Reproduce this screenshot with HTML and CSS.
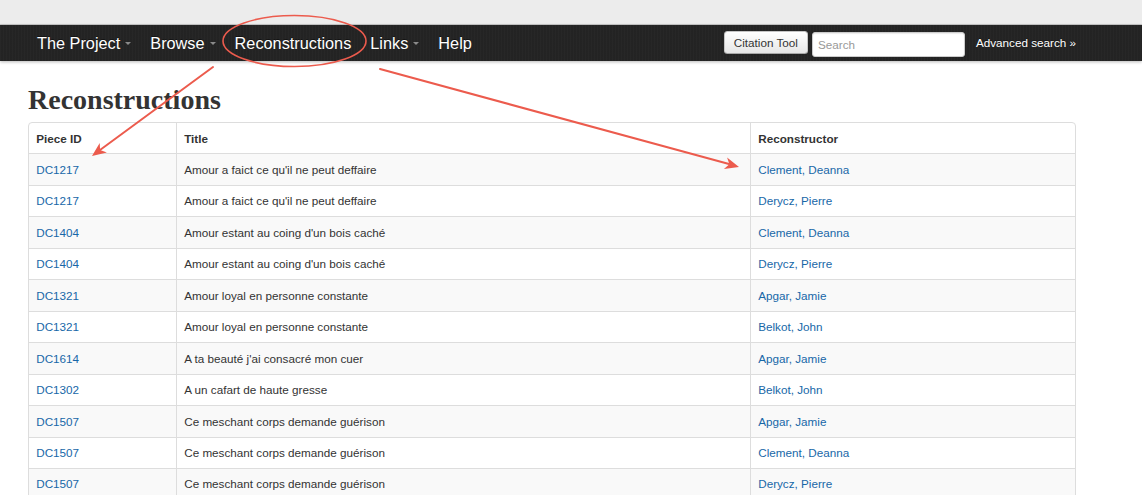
FILE: index.html
```html
<!DOCTYPE html>
<html lang="en">
<head>
<meta charset="utf-8">
<title>Reconstructions</title>
<link rel="stylesheet" href="styles.css">
</head>
<body>
<div class="chrome"></div>
<header class="navbar">
  <div class="container nav-inner">
    <ul class="nav">
      <li><a href="#">The Project<span class="caret"></span></a></li>
      <li><a href="#">Browse<span class="caret"></span></a></li>
      <li><a href="#">Reconstructions</a></li>
      <li><a href="#">Links<span class="caret"></span></a></li>
      <li><a href="#">Help</a></li>
    </ul>
    <div class="nav-right">
      <button class="btn" type="button">Citation Tool</button>
      <input class="search" type="text" placeholder="Search">
      <a class="adv" href="#">Advanced search &raquo;</a>
    </div>
  </div>
</header>
<main class="container">
  <h1 class="title">Reconstructions</h1>
  <table class="grid">
    <colgroup>
      <col class="c1"><col class="c2"><col class="c3">
    </colgroup>
    <thead>
      <tr><th>Piece ID</th><th>Title</th><th>Reconstructor</th></tr>
    </thead>
    <tbody>
      <tr><td><a href="#">DC1217</a></td><td>Amour a faict ce qu'il ne peut deffaire</td><td><a href="#">Clement, Deanna</a></td></tr>
      <tr><td><a href="#">DC1217</a></td><td>Amour a faict ce qu'il ne peut deffaire</td><td><a href="#">Derycz, Pierre</a></td></tr>
      <tr><td><a href="#">DC1404</a></td><td>Amour estant au coing d'un bois caché</td><td><a href="#">Clement, Deanna</a></td></tr>
      <tr><td><a href="#">DC1404</a></td><td>Amour estant au coing d'un bois caché</td><td><a href="#">Derycz, Pierre</a></td></tr>
      <tr><td><a href="#">DC1321</a></td><td>Amour loyal en personne constante</td><td><a href="#">Apgar, Jamie</a></td></tr>
      <tr><td><a href="#">DC1321</a></td><td>Amour loyal en personne constante</td><td><a href="#">Belkot, John</a></td></tr>
      <tr><td><a href="#">DC1614</a></td><td>A ta beauté j'ai consacré mon cuer</td><td><a href="#">Apgar, Jamie</a></td></tr>
      <tr><td><a href="#">DC1302</a></td><td>A un cafart de haute gresse</td><td><a href="#">Belkot, John</a></td></tr>
      <tr><td><a href="#">DC1507</a></td><td>Ce meschant corps demande guérison</td><td><a href="#">Apgar, Jamie</a></td></tr>
      <tr><td><a href="#">DC1507</a></td><td>Ce meschant corps demande guérison</td><td><a href="#">Clement, Deanna</a></td></tr>
      <tr><td><a href="#">DC1507</a></td><td>Ce meschant corps demande guérison</td><td><a href="#">Derycz, Pierre</a></td></tr>
    </tbody>
  </table>
</main>
<svg class="annot" width="1142" height="495" viewBox="0 0 1142 495" aria-hidden="true">
  <g fill="none" stroke="#ec5b4d" stroke-linecap="round">
    <ellipse cx="294.5" cy="41" rx="71.5" ry="25.5" stroke-width="1.6"/>
    <line x1="213" y1="67" x2="100" y2="150" stroke-width="2"/>
    <line x1="380" y1="69" x2="729" y2="164" stroke-width="2"/>
  </g>
  <g fill="#ec5b4d">
    <polygon points="92,156 106.9,152.5 100.1,150.1 99.7,142.9"/>
    <polygon points="739,167 723.9,169.1 729.4,164.3 727.1,157.5"/>
  </g>
</svg>
</body>
</html>
```

FILE: styles.css
```css
* { box-sizing: border-box; }

html, body {
  margin: 0;
  padding: 0;
  background: #fff;
}

body {
  font-family: "Liberation Sans", Arial, Helvetica, sans-serif;
  font-size: 11.7px;
  line-height: 16.2px;
  color: #333;
  position: relative;
  width: 1142px;
  height: 495px;
  overflow: hidden;
}

a { text-decoration: none; }

.chrome {
  height: 25px;
  background: #ececec;
  border-bottom: 1px solid #c9c9c9;
}

.navbar {
  height: 36px;
  background: #242424;
  background-image: repeating-linear-gradient(90deg, rgba(255,255,255,0.015) 0 1px, rgba(0,0,0,0.02) 1px 3px);
  box-shadow: 0 1px 3px rgba(0,0,0,0.28);
  position: relative;
}

.container {
  margin-left: 28px;
  width: 1048px;
}

.nav-inner {
  display: flex;
  align-items: center;
  height: 100%;
}

.nav {
  list-style: none;
  margin: 0;
  padding: 0;
  display: flex;
  align-items: center;
}

.nav a {
  display: flex;
  align-items: center;
  padding: 0 9.5px;
  font-size: 16.3px;
  line-height: 20px;
  color: #fff;
  text-shadow: 0 -1px 0 rgba(0,0,0,0.45);
}

.nav li:first-child a { padding-left: 9px; }

.caret {
  display: inline-block;
  width: 0;
  height: 0;
  margin-left: 5px;
  margin-top: 1px;
  border-top: 3.5px solid #8a8a8a;
  border-left: 3px solid transparent;
  border-right: 3px solid transparent;
}

.nav-right {
  margin-left: auto;
  display: flex;
  align-items: center;
}

.btn {
  height: 23px;
  padding: 0 9px;
  font-family: "Liberation Sans", Arial, sans-serif;
  font-size: 11.7px;
  color: #333;
  background: linear-gradient(#ffffff, #e6e6e6);
  border: 1px solid #c5c5c5;
  border-bottom-color: #a8a8a8;
  border-radius: 3.5px;
  box-shadow: inset 0 1px 0 rgba(255,255,255,0.3), 0 1px 2px rgba(0,0,0,0.05);
  margin-top: -1px;
}

.search {
  width: 153px;
  height: 25px;
  margin-left: 4px;
  margin-top: 3px;
  padding: 0 5px;
  font-family: "Liberation Sans", Arial, sans-serif;
  font-size: 11.7px;
  color: #555;
  background: #fff;
  border: 1px solid #ccc;
  border-radius: 3px;
  box-shadow: inset 0 1px 1px rgba(0,0,0,0.08);
}

.search::placeholder { color: #999; }

.adv {
  margin-left: 11px;
  font-size: 11.7px;
  color: #fff;
  text-shadow: 0 -1px 0 rgba(0,0,0,0.4);
}

.title {
  margin: 23px 0 7px;
  font-family: "Liberation Serif", "Times New Roman", serif;
  font-weight: bold;
  font-size: 28px;
  line-height: 31px;
  color: #333;
}

.grid {
  width: 1048px;
  table-layout: fixed;
  border-collapse: separate;
  border-spacing: 0;
  border: 1px solid #ddd;
  border-radius: 4px;
}

.grid .c1 { width: 147px; }
.grid .c2 { width: 574px; }
.grid .c3 { width: 325px; }

.grid th,
.grid td {
  padding: 7.15px 7.2px;
  line-height: 16.2px;
  text-align: left;
  vertical-align: top;
  border-top: 1px solid #ddd;
  border-left: 1px solid #ddd;
}

.grid th:first-child,
.grid td:first-child { border-left: none; }

.grid thead th {
  border-top: none;
  font-weight: bold;
  color: #333;
  padding-top: 7.65px;
  padding-bottom: 6.65px;
}

.grid tbody tr:nth-child(odd) td { background: #f9f9f9; }

.grid a { color: #1767a8; }

.annot {
  position: absolute;
  left: 0;
  top: 0;
  pointer-events: none;
}
```
